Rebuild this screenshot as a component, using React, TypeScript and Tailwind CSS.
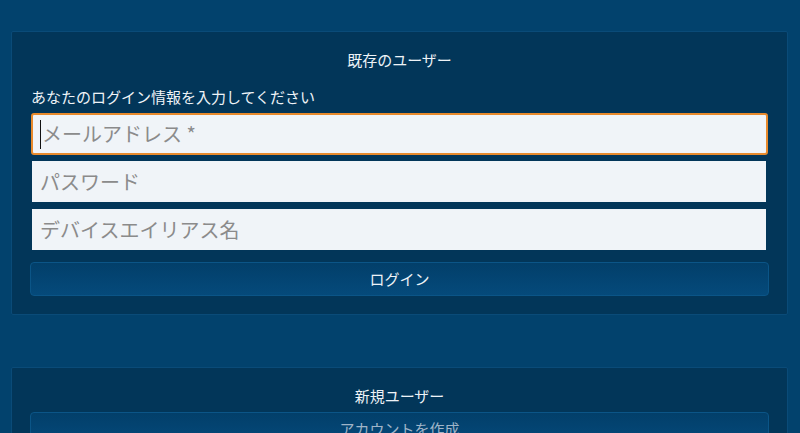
import React from "react";

const font = { fontFamily: '"Noto Sans CJK JP", "Noto Sans", sans-serif' };

export default function App() {
  return (
    <div
      className="w-[800px] h-[433px] overflow-hidden bg-[#02426d] pt-[31px] pl-[11px] pr-[12px] flex flex-col gap-[52px]"
      style={font}
    >
      <div className="bg-[#023659] border border-[#0a4b78] rounded-[2px] px-[19px] pt-[18px] pb-[18px] flex flex-col">
        <div className="text-center text-[15px] leading-[20px] text-[#eef3f7]">既存のユーザー</div>
        <div className="mt-[17px] text-[15px] leading-[20px] text-[#eef3f7]">あなたのログイン情報を入力してください</div>
        <div className="mt-[6px] h-[42px] bg-[#f0f4f8] border-2 border-[#e88a2c] rounded-[3px] flex items-center pl-[7px] text-[20px] text-[#8b8b8b] relative">
          <span className="w-px h-[29px] bg-[#111] mr-[1px]" />
          <span>メールアドレス *</span>
        </div>
        <div className="mt-[6px] ml-px mr-[2px] h-[41px] bg-[#f0f4f8] flex items-center pl-[8px] text-[20px] text-[#8b8b8b]">
          パスワード
        </div>
        <div className="mt-[7px] ml-px mr-[2px] h-[41px] bg-[#f0f4f8] flex items-center pl-[8px] text-[20px] text-[#8b8b8b]">
          デバイスエイリアス名
        </div>
        <div className="mt-[12px] -mx-px h-[34px] rounded-[4px] border border-[#0b5587] bg-gradient-to-b from-[#023f6a] to-[#054a7b] flex items-center justify-center text-[15px] text-[#eef3f7]">
          ログイン
        </div>
      </div>
      <div className="bg-[#023659] border border-[#0a4b78] rounded-[2px] px-[19px] pt-[18px] pb-[18px] flex flex-col shrink-0">
        <div className="text-center text-[15px] leading-[20px] text-[#eef3f7]">新規ユーザー</div>
        <div className="mt-[6px] -mx-px h-[34px] rounded-[4px] border border-[#0b5587] bg-gradient-to-b from-[#023f6a] to-[#054a7b] flex items-center justify-center text-[15px] text-[#9fb4c8]">
          アカウントを作成
        </div>
      </div>
    </div>
  );
}
